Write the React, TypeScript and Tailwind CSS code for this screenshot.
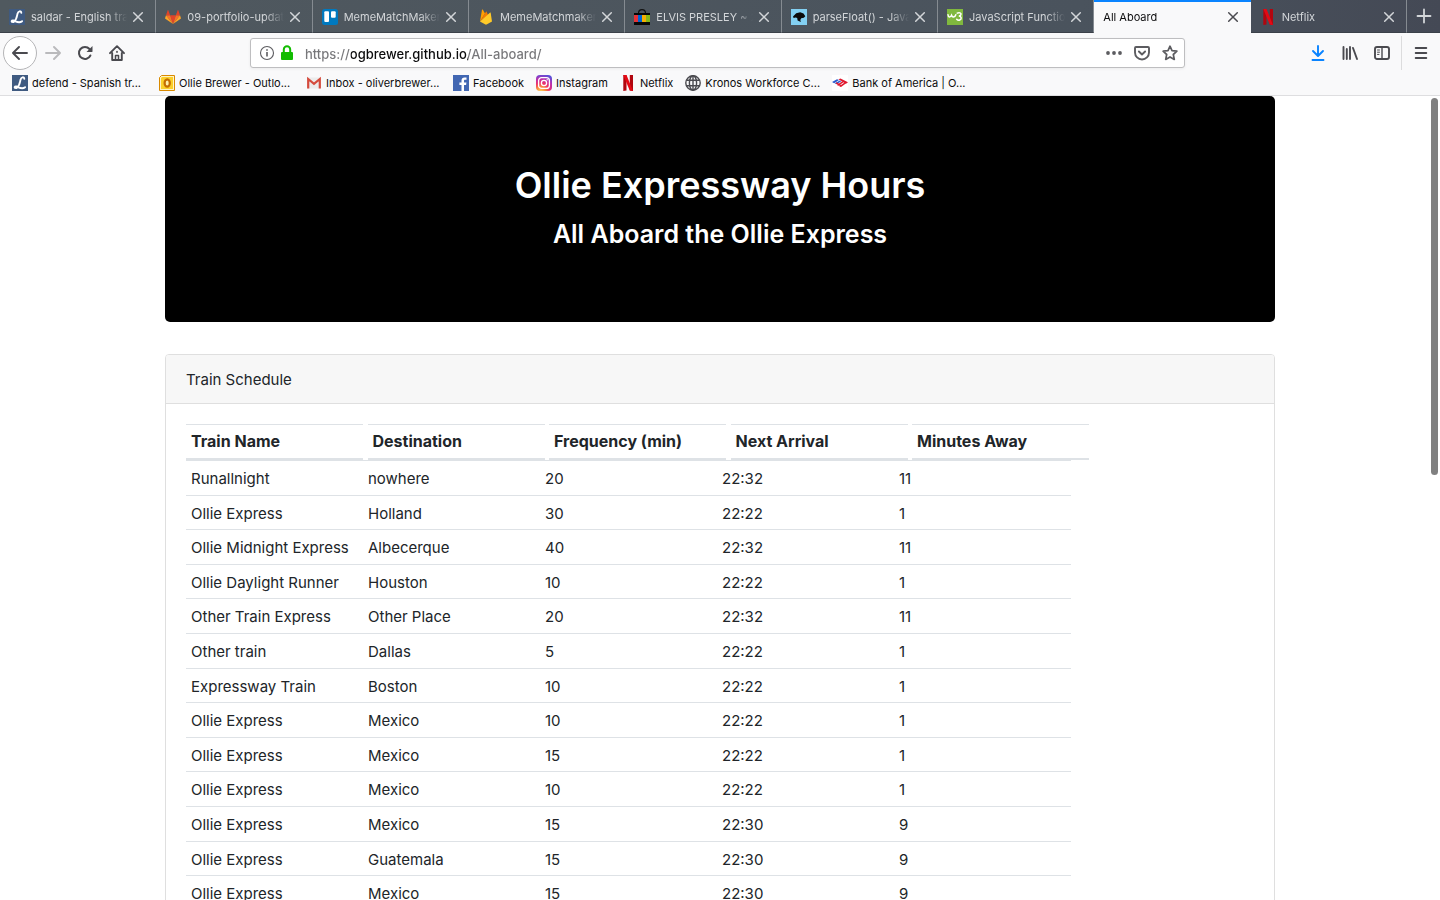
import React from "react";

type IconProps = { className?: string };

const LIcon = () => (
  <svg viewBox="0 0 16 16" className="size-4 shrink-0" aria-hidden="true">
    <rect width="16" height="16" fill="#3f5a80" />
    <path d="M12.300 3.800C12 1.600 9.300 1.700 8.500 4.800c-.7 2.800-.9 6.100-3.500 7.800-1.200.7-2.600.3-2.300-.5.4-1 2.300-.6 3.800.2 2.600 1.200 4.800 1.300 6.600-.1" fill="none" stroke="#fff" strokeWidth="1.900" strokeLinecap="round" />
  </svg>
);

const GitLabIcon = () => (
  <svg viewBox="0 0 16 16" className="size-4 shrink-0" aria-hidden="true">
    <path d="M8 15 5.100 6.300h5.800z" fill="#e24329" />
    <path d="M8 15 5.100 6.300H1zM8 15l2.900-8.700H15z" fill="#fc6d26" />
    <path d="M1 6.300.1 9c-.1.300 0 .6.200.8L8 15zM15 6.300l.9 2.700c.1.300 0 .6-.2.8L8 15z" fill="#fca326" />
    <path d="M1 6.300h4.100L3.300 1.200c-.1-.3-.5-.3-.6 0zM15 6.300h-4.100l1.800-5.100c.1-.3.500-.3.600 0z" fill="#e24329" />
  </svg>
);

const TrelloIcon = () => (
  <svg viewBox="0 0 16 16" className="size-4 shrink-0" aria-hidden="true">
    <rect width="16" height="16" rx="2.500" fill="#0079bf" />
    <rect x="2.300" y="2.300" width="4.700" height="10.700" rx="1" fill="#fff" />
    <rect x="9" y="2.300" width="4.700" height="6.500" rx="1" fill="#fff" />
  </svg>
);

const FirebaseIcon = () => (
  <svg viewBox="0 0 16 16" className="size-4 shrink-0" aria-hidden="true">
    <path d="m2 12.500 2-11.800c.1-.4.500-.4.700-.1L7 4.600z" fill="#ffa000" />
    <path d="m2 12.500 6-9.800c.2-.3.500-.3.600 0L10 6z" fill="#f57c00" />
    <path d="m2 12.500 9.900-8.800c.3-.3.700-.1.800.2L14 12.500l-5.400 3c-.4.200-.8.200-1.200 0z" fill="#ffca28" />
  </svg>
);

const EbayIcon = () => (
  <svg viewBox="0 0 16 16" className="size-4 shrink-0" aria-hidden="true">
    <path d="M4.500 4.500C4.500-.6 11.500-.6 11.500 4.500" fill="none" stroke="#111" strokeWidth="1.200" />
    <path d="M0 4h16v12H0z" fill="#080808" />
    <path d="M0 6h4v7H0z" fill="#e53238" />
    <path d="M4 6h4v7H4z" fill="#0064d2" />
    <path d="M8 6h4v7H8z" fill="#f5af02" />
    <path d="M12 6h4v7h-4z" fill="#86b817" />
  </svg>
);

const MdnIcon = () => (
  <svg viewBox="0 0 16 16" className="size-4 shrink-0" aria-hidden="true">
    <rect width="16" height="16" fill="#83d0f2" />
    <path d="M2 7.500 5.200 4.200l4-1L12.500 4.600l1.800 2.600-1.500 1.500-2.600.5-.9 1.900.6 1.900-3.300-1.600-.4-2.300-1.600-.6L2.600 9z" fill="#0b0b0b" />
  </svg>
);

const W3Icon = () => (
  <svg viewBox="0 0 16 16" className="size-4 shrink-0" aria-hidden="true">
    <rect width="16" height="16" fill="#80b83e" />
    <path d="M1 5.800c.2 2.800 2.400 2.800 3.500.5.600 2.300 3.500 2.300 4.300-.5M10.200 4.200c2-1.200 4.300-.2 3.700 1.500-.3.900-1.300 1.300-2.100 1.300 3 .2 3 3.300 1 4-1.200.4-2.400 0-3.100-.8" fill="none" stroke="#fff" strokeWidth="1.500" strokeLinecap="round" />
  </svg>
);

const NetflixIcon = () => (
  <svg viewBox="0 0 16 16" className="size-4 shrink-0" aria-hidden="true">
    <path d="M3.300 0h3.200v15.600l-3.200.4zM9.800 0H13v16l-3.200-.4z" fill="#b1060f" />
    <path d="M3.300 0h3.200L13 16l-3.300-.4z" fill="#e50914" />
  </svg>
);

const OutlookIcon = () => (
  <svg viewBox="0 0 16 16" className="size-4 shrink-0" aria-hidden="true">
    <path d="M2.500.5h13v15H.5v-13z" fill="#fff3c4" stroke="#d98a00" />
    <path d="M3 2h11v12H2V3z" fill="#fbd02a" />
    <ellipse cx="8.200" cy="8" rx="2.600" ry="3.600" fill="#fff0a8" stroke="#c46d00" strokeWidth="2.200" />
  </svg>
);

const GmailIcon = () => (
  <svg viewBox="0 0 16 16" className="size-4 shrink-0" aria-hidden="true">
    <rect x="1" y="2.500" width="14" height="11" fill="#ececec" />
    <path d="M2.200 13.500V4L8 8.800 13.800 4v9.500" fill="none" stroke="#d54b3d" strokeWidth="2.200" />
  </svg>
);

const FacebookIcon = () => (
  <svg viewBox="0 0 16 16" className="size-4 shrink-0" aria-hidden="true">
    <rect width="16" height="16" fill="#4267b2" />
    <path d="M11 16V9.900h2.100l.3-2.400H11V6c0-.7.200-1.200 1.200-1.200h1.300V2.600c-.2 0-1-.1-1.900-.1-1.900 0-3.100 1.100-3.100 3.200v1.800H6.400v2.400h2.100V16z" fill="#fff" />
  </svg>
);

const InstagramIcon = () => (
  <svg viewBox="0 0 16 16" className="size-4 shrink-0" aria-hidden="true">
    <defs>
      <radialGradient id="insta" cx=".3" cy="1.050" r="1.100">
        <stop offset="0" stopColor="#fed95c" />
        <stop offset=".28" stopColor="#fb8a3c" />
        <stop offset=".5" stopColor="#ee2f6b" />
        <stop offset=".75" stopColor="#b72fb0" />
        <stop offset="1" stopColor="#5a50d8" />
      </radialGradient>
    </defs>
    <rect width="16" height="16" rx="4" fill="url(#insta)" />
    <rect x="2.600" y="2.600" width="10.800" height="10.800" rx="3" fill="none" stroke="#fff" strokeWidth="1.300" />
    <circle cx="8" cy="8" r="2.600" fill="none" stroke="#fff" strokeWidth="1.300" />
    <circle cx="11.200" cy="4.800" r=".7" fill="#fff" />
  </svg>
);

const GlobeIcon = () => (
  <svg viewBox="0 0 16 16" className="size-4 shrink-0" fill="none" stroke="#4a4a4f" strokeWidth="1.400" aria-hidden="true">
    <circle cx="8" cy="8" r="7.200" />
    <ellipse cx="8" cy="8" rx="3.600" ry="7.200" />
    <path d="M1.500 5.200h13M1.500 10.800h13M8 1v14" />
  </svg>
);

const BoaIcon = () => (
  <svg viewBox="0 0 16 16" className="size-4 shrink-0" aria-hidden="true">
    <rect width="16" height="16" fill="#fff" />
    <path d="m0 7 5-2.800 2 .7L2.200 8.200zM2.800 8.600l5-3.200 1.700.7-4.800 3.200z" fill="#2a5bd0" />
    <path d="m6.500 4.200 2-.8L16 7.300l-2 1.400zM4.800 9.900l5.200-3.400 1.500.7-5 3.500zM7.200 11.200l5-3.400 1.600.8L9 12.100z" fill="#e0182d" />
    <path d="m4.500 7.200 5.500 3.300-1.200.9-5.300-3.200z" fill="#e0182d" />
  </svg>
);

const CloseIcon = ({ className = "" }: IconProps) => (
  <svg viewBox="0 0 16 16" className={"size-4 " + className} fill="none" stroke="currentColor" strokeWidth="1.500" strokeLinecap="round" aria-hidden="true">
    <path d="m3.700 3.700 8.600 8.600M12.300 3.700l-8.600 8.600" />
  </svg>
);

type Tab = { title: string; Icon?: () => React.ReactElement; active?: boolean };

const tabs: Tab[] = [
  { title: "saldar - English tra", Icon: LIcon },
  { title: "09-portfolio-updat", Icon: GitLabIcon },
  { title: "MemeMatchMaker", Icon: TrelloIcon },
  { title: "MemeMatchmaker", Icon: FirebaseIcon },
  { title: "ELVIS PRESLEY ~ 2", Icon: EbayIcon },
  { title: "parseFloat() - Java", Icon: MdnIcon },
  { title: "JavaScript Functio", Icon: W3Icon },
  { title: "All Aboard", active: true },
  { title: "Netflix", Icon: NetflixIcon },
];

type Bookmark = { title: string; Icon: () => React.ReactElement; long?: boolean };

const bookmarks: Bookmark[] = [
  { title: "defend - Spanish tr...", Icon: LIcon, long: true },
  { title: "Ollie Brewer - Outlo...", Icon: OutlookIcon, long: true },
  { title: "Inbox - oliverbrewer...", Icon: GmailIcon, long: true },
  { title: "Facebook", Icon: FacebookIcon },
  { title: "Instagram", Icon: InstagramIcon },
  { title: "Netflix", Icon: NetflixIcon },
  { title: "Kronos Workforce C...", Icon: GlobeIcon, long: true },
  { title: "Bank of America | O...", Icon: BoaIcon, long: true },
];

const columns = ["Train Name", "Destination", "Frequency (min)", "Next Arrival", "Minutes Away"];

const trains = [
  ["Runallnight", "nowhere", "20", "22:32", "11"],
  ["Ollie Express", "Holland", "30", "22:22", "1"],
  ["Ollie Midnight Express", "Albecerque", "40", "22:32", "11"],
  ["Ollie Daylight Runner", "Houston", "10", "22:22", "1"],
  ["Other Train Express", "Other Place", "20", "22:32", "11"],
  ["Other train", "Dallas", "5", "22:22", "1"],
  ["Expressway Train", "Boston", "10", "22:22", "1"],
  ["Ollie Express", "Mexico", "10", "22:22", "1"],
  ["Ollie Express", "Mexico", "15", "22:22", "1"],
  ["Ollie Express", "Mexico", "10", "22:22", "1"],
  ["Ollie Express", "Mexico", "15", "22:30", "9"],
  ["Ollie Express", "Guatemala", "15", "22:30", "9"],
  ["Ollie Express", "Mexico", "15", "22:30", "9"],
];

function TabStrip() {
  return (
    <div className="flex h-[33px] bg-linear-to-r from-[#50595f] via-[#4a535d] via-75% to-[#444955]">
      <ul className="flex min-w-0 flex-1">
        {tabs.map(({ title, Icon, active }) => (
          <li
            key={title}
            className={
              active
                ? "flex min-w-0 flex-1 items-center gap-[3px] border-t-2 border-[#0a84ff] bg-[#f9f9fa] pr-[10px] pb-[1px] pl-[9px] text-[#0c0c0d]"
                : "flex min-w-0 flex-1 items-center gap-[3px] border-r border-b border-r-[#858b91] border-b-[#3b4149] pt-[2px] pr-[9px] pl-[9px] text-[#d3d6d9]"
            }
          >
            <a href="#" className="flex min-w-0 flex-1 items-center gap-[6px]">
              {Icon && <Icon />}
              <span className="min-w-0 flex-1 overflow-hidden mask-r-from-80% text-[11px] leading-4 whitespace-nowrap">{title}</span>
            </a>
            <button type="button" aria-label={"Close " + title} className="shrink-0">
              <CloseIcon className={active ? "text-[#4a4a4f]" : "text-[#d3d6d9]"} />
            </button>
          </li>
        ))}
      </ul>
      <button type="button" aria-label="New tab" className="flex w-[33px] items-center justify-center border-b border-[#3b4149] text-[#d3d6d9]">
        <svg viewBox="0 0 16 16" className="size-4" fill="none" stroke="currentColor" strokeWidth="1.800" strokeLinecap="round" aria-hidden="true">
          <path d="M8 1.500v13M1.500 8h13" />
        </svg>
      </button>
    </div>
  );
}

function ToolButton({ label, children }: { label: string; children: React.ReactNode }) {
  return (
    <button type="button" aria-label={label} className="flex size-8 shrink-0 items-center justify-center text-[#4a4a4f]">
      {children}
    </button>
  );
}

function AddressBar() {
  return (
    <div className="flex h-[30px] items-center rounded-[3px] border border-[#bebec0] bg-white px-[6px] shadow-[0_1px_3px_rgba(0,0,0,0.06)]">
      <svg viewBox="0 0 16 16" className="mx-[2px] size-4 shrink-0" fill="none" stroke="#5c5c60" strokeWidth="1.100" aria-hidden="true">
        <circle cx="8" cy="8" r="6.500" />
        <path d="M8 7v4.500M8 4.300v1.500" strokeWidth="1.600" />
      </svg>
      <svg viewBox="0 0 16 16" className="mx-[2px] size-4 shrink-0" aria-hidden="true">
        <rect x="2" y="7" width="12" height="8" rx="1" fill="#12bc00" />
        <path d="M4.800 8V4.500a3.200 3.200 0 0 1 6.400 0V8" fill="none" stroke="#12bc00" strokeWidth="2" />
      </svg>
      <input
        type="text"
        aria-label="Address"
        readOnly
        value="https://ogbrewer.github.io/All-aboard/"
        className="ml-2 min-w-0 flex-1 bg-[linear-gradient(90deg,#77777a_46px,#0c0c0d_46px,#0c0c0d_163px,#77777a_163px)] bg-clip-text pt-[3px] text-[13px] font-medium text-transparent outline-none"
      />
      <button type="button" aria-label="Page actions" className="mx-[6px]">
        <svg viewBox="0 0 16 16" className="size-4" fill="#5c5c60" aria-hidden="true">
          <circle cx="2" cy="8" r="1.900" />
          <circle cx="8" cy="8" r="1.900" />
          <circle cx="14" cy="8" r="1.900" />
        </svg>
      </button>
      <button type="button" aria-label="Save to Pocket" className="mx-[6px]">
        <svg viewBox="0 0 16 16" className="size-4" fill="none" stroke="#5c5c60" strokeWidth="1.900" strokeLinecap="round" strokeLinejoin="round" aria-hidden="true">
          <path d="M2 2h12c.6 0 1 .4 1 1v4.500a7 7 0 0 1-14 0V3c0-.6.400-1 1-1z" />
          <path d="m4.900 6.500 3.100 3 3.100-3" />
        </svg>
      </button>
      <button type="button" aria-label="Bookmark this page" className="ml-[6px]">
        <svg viewBox="0 0 16 16" className="size-4" fill="none" stroke="#5c5c60" strokeWidth="1.700" strokeLinejoin="round" aria-hidden="true">
          <path d="m8 1.200 2 4.500 4.900.5-3.600 3.300 1 4.900L8 11.900l-4.300 2.500 1-4.900L1.100 6.200 6 5.700z" />
        </svg>
      </button>
    </div>
  );
}

function NavBar() {
  return (
    <div className="flex h-[40px] items-center">
      <button type="button" aria-label="Back" className="ml-[3px] flex size-[34px] shrink-0 items-center justify-center rounded-full border border-[#b5b5b7] bg-white text-[#4a4a4f]">
        <svg viewBox="0 0 16 16" className="size-4" fill="none" stroke="currentColor" strokeWidth="1.900" strokeLinecap="round" strokeLinejoin="round" aria-hidden="true">
          <path d="M15 8H1.300M7 2 1 8l6 6" />
        </svg>
      </button>
      <ToolButton label="Forward">
        <svg viewBox="0 0 16 16" className="size-4 text-[#bababc]" fill="none" stroke="currentColor" strokeWidth="1.900" strokeLinecap="round" strokeLinejoin="round" aria-hidden="true">
          <path d="M1 8h13.700M9 2l6 6-6 6" />
        </svg>
      </ToolButton>
      <ToolButton label="Reload">
        <svg viewBox="0 0 16 16" className="size-4" fill="none" stroke="currentColor" strokeWidth="2" strokeLinecap="round" aria-hidden="true">
          <path d="M13.400 10.500A6 6 0 1 1 12.500 4" />
          <path d="M15.500 1v5.500c0 .3-.2.500-.5.500H9.500z" fill="currentColor" stroke="none" />
        </svg>
      </ToolButton>
      <ToolButton label="Home">
        <svg viewBox="0 0 16 16" className="size-4" fill="none" stroke="currentColor" strokeWidth="1.900" strokeLinecap="round" strokeLinejoin="round" aria-hidden="true">
          <path d="M1 8.200 8 1.200l7 7M3.200 8v7h9.600V8" />
          <path d="M6.500 15v-4.500h3V15" strokeWidth="1.500" />
          <path d="M8 6.500v.6" strokeWidth="1.700" />
        </svg>
      </ToolButton>
      <div className="flex-1" />
      <div className="min-w-0 flex-8">
        <AddressBar />
      </div>
      <div className="flex-1" />
      <ToolButton label="Downloads">
        <svg viewBox="0 0 16 16" className="size-4 text-[#0a84ff]" fill="none" stroke="currentColor" strokeWidth="1.900" strokeLinecap="round" strokeLinejoin="round" aria-hidden="true">
          <path d="M8 1v9.500M3 6l5 5 5-5M2.500 15h11" />
        </svg>
      </ToolButton>
      <ToolButton label="Library">
        <svg viewBox="0 0 16 16" className="size-4" fill="none" stroke="currentColor" strokeWidth="1.900" strokeLinecap="round" aria-hidden="true">
          <path d="M1.500 2v12M4.800 4v10M8 2v12M11 3l4 11" />
        </svg>
      </ToolButton>
      <ToolButton label="Sidebars">
        <svg viewBox="0 0 16 16" className="size-4" fill="none" stroke="currentColor" strokeWidth="1.900" strokeLinecap="round" aria-hidden="true">
          <rect x="1" y="2" width="14" height="12" rx="2" />
          <path d="M8 2v12" strokeWidth="1.400" />
          <path d="M3.500 5h2M3.500 7.200h2M3.500 9.400h1.500" strokeWidth="1" />
        </svg>
      </ToolButton>
      <div className="ml-[3px] h-[34px] w-px bg-[#dcdcdd]" />
      <button type="button" aria-label="Menu" className="flex h-8 w-[38px] shrink-0 items-center justify-center text-[#4a4a4f]">
        <svg viewBox="0 0 16 16" className="size-4" fill="none" stroke="currentColor" strokeWidth="1.900" strokeLinecap="round" aria-hidden="true">
          <path d="M2.700 3h10.600M2.700 8h10.600M2.700 13h10.600" />
        </svg>
      </button>
    </div>
  );
}

function BookmarksBar() {
  return (
    <nav className="flex h-[23px] items-start gap-3 border-b border-[#dedee0] pl-3 text-[11px] leading-4 whitespace-nowrap text-[#0c0c0d]">
      {bookmarks.map(({ title, Icon, long }) => (
        <a key={title} href="#" className={long ? "flex w-[135px] items-center gap-1 pt-[2px]" : "flex items-center gap-1 pt-[2px]"}>
          <Icon />
          {title}
        </a>
      ))}
    </nav>
  );
}

export default function App() {
  return (
    <div className="flex h-screen flex-col overflow-hidden bg-white font-['Inter','Liberation_Sans',sans-serif] text-[#212529]">
      <header className="shrink-0 bg-[#f9f9fa]">
        <TabStrip />
        <NavBar />
        <BookmarksBar />
      </header>
      <div className="relative min-h-0 flex-1 overflow-hidden">
        <main className="mx-auto max-w-[1110px]">
          <section className="mb-8 rounded-[5px] bg-black px-8 pt-[65px] pb-[71px] text-center text-white">
            <h1 className="mb-2 text-[36px] leading-[48px] font-semibold">Ollie Expressway Hours</h1>
            <h2 className="text-[25px] leading-[34px] font-semibold">All Aboard the Ollie Express</h2>
          </section>
          <section className="rounded-[4px] border border-[#dfdfdf]">
            <h3 className="rounded-t-[3px] border-b border-[#dfdfdf] bg-[#f7f7f7] px-5 pt-[13px] pb-[11px] text-[15px] leading-6">Train Schedule</h3>
            <div className="p-5">
              <table className="block text-[15px] leading-6">
                <thead className="block">
                  <tr className="flex w-[903px] justify-between">
                    {columns.map((name) => (
                      <th key={name} scope="col" className="h-9 w-[177px] border-t border-b-2 border-[#dee2e6] px-[5px] pt-1 text-left text-base leading-6 font-bold">
                        {name}
                      </th>
                    ))}
                  </tr>
                </thead>
                <tbody className="block w-[885px]">
                  {trains.map((train, i) => (
                    <tr key={i} className="flex h-[35px] items-center border-t border-[#dee2e6] px-[5px] pt-[2px] nth-[5n+2]:h-[34px] nth-[5n+4]:h-[34px]">
                      {train.map((value, j) => (
                        <td key={j} className="w-[177px] shrink-0 last:w-[167px]">
                          {value}
                        </td>
                      ))}
                    </tr>
                  ))}
                </tbody>
              </table>
            </div>
          </section>
        </main>
        <div className="absolute top-[2px] right-[2px] h-[377px] w-[7px] rounded-full bg-[#808080]" />
      </div>
    </div>
  );
}
